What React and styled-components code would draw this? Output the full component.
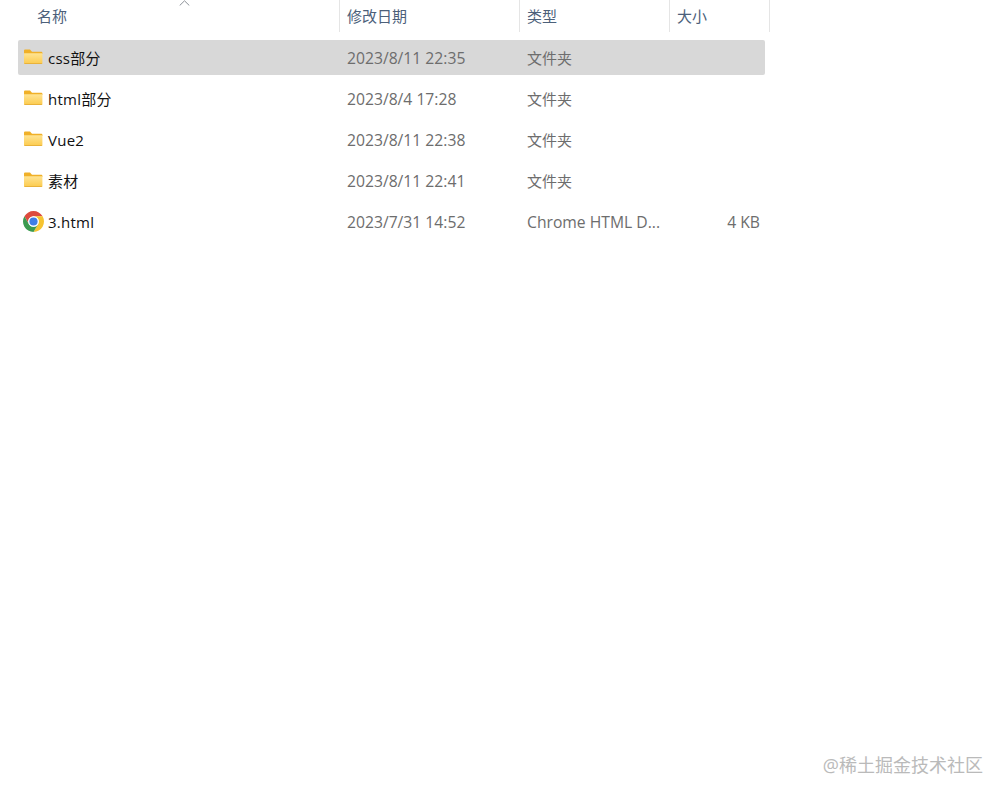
import React from 'react';
import styled, {createGlobalStyle} from "styled-components";

const GlobalStyle = createGlobalStyle`
  html, body {
    margin: 0;
    background: #fff;
  }
  body {
    font-family: "Open Sans", "Noto Sans CJK SC", sans-serif;
  }
`;

const files = [
    {name: 'css部分', date: '2023/8/11 22:35', type: '文件夹', selected: true},
    {name: 'html部分', date: '2023/8/4 17:28', type: '文件夹'},
    {name: 'Vue2', date: '2023/8/11 22:38', type: '文件夹'},
    {name: '素材', date: '2023/8/11 22:41', type: '文件夹'},
    {name: '3.html', date: '2023/7/31 14:52', type: 'Chrome HTML D...', size: '4 KB', chrome: true},
];

const FolderIcon = () => (
    <svg width="20" height="16" viewBox="0 0 20 16">
        <defs>
            <linearGradient id="folderFill" x1="0" y1="0" x2="0" y2="1">
                <stop offset="0" stopColor="#ffe493"/>
                <stop offset="1" stopColor="#fccb4e"/>
            </linearGradient>
        </defs>
        <path d="M1 1.5C1 1 1.4.6 2 .6h5l2 2.2h9.5c.5 0 .9.4.9.9V5H1z" fill="#f0b028"/>
        <path d="M1 4.2h18.4v9.6c0 .6-.4 1-1 1H2c-.6 0-1-.4-1-1z" fill="url(#folderFill)"/>
        <path d="M1 14h18.4v.1c0 .5-.4.8-1 .8H2c-.6 0-1-.3-1-.8z" fill="#e9b23a"/>
    </svg>
);

const ChromeIcon = () => (
    <svg width="21" height="21" viewBox="2 2 44 44">
        <path d="M43.05 13H24A11 11 0 0 0 14.47 29.5L4.95 13A22 22 0 0 1 43.05 13z" fill="#dd4b3e"/>
        <path d="M24 46L33.53 29.5A11 11 0 0 0 24 13H43.05A22 22 0 0 1 24 46z" fill="#f6c431"/>
        <path d="M4.95 13L14.47 29.5A11 11 0 0 0 33.53 29.5L24 46A22 22 0 0 1 4.95 13z" fill="#3c9a50"/>
        <circle cx="24" cy="24" r="11" fill="#fff"/>
        <circle cx="24" cy="24" r="8.6" fill="#3f7ee6"/>
    </svg>
);

const App = () => {
    return (
        <Page>
            <GlobalStyle/>
            <Header>
                <HeaderCell width="321px" $indent="19px">
                    名称
                    <SortArrow width="11" height="6" viewBox="0 0 11 6">
                        <path d="M.7 5.5L5.5.8l4.8 4.7" fill="none" stroke="#8a8f96" strokeWidth="1"/>
                    </SortArrow>
                </HeaderCell>
                <HeaderCell width="180px" $divider>修改日期</HeaderCell>
                <HeaderCell width="150px" $divider>类型</HeaderCell>
                <HeaderCell width="101px" $divider $last>大小</HeaderCell>
            </Header>
            <List>
                {files.map((file) => (
                    <Row key={file.name} $selected={file.selected}>
                        <NameCell>
                            <IconSlot $chrome={file.chrome}>{file.chrome ? <ChromeIcon/> : <FolderIcon/>}</IconSlot>
                            {file.name}
                        </NameCell>
                        <DateCell>{file.date}</DateCell>
                        <TypeCell $latin={file.chrome}>{file.type}</TypeCell>
                        <SizeCell>{file.size}</SizeCell>
                    </Row>
                ))}
            </List>
            <Watermark>@稀土掘金技术社区</Watermark>
        </Page>
    );
};
export default App;

const Page = styled.div`
  position: relative;
  height: 798px;
  padding-left: 18px;
  box-sizing: border-box;
  overflow: hidden;
`;

const Header = styled.div`
  display: flex;
  height: 32px;
`;

const HeaderCell = styled.div`
  position: relative;
  box-sizing: border-box;
  width: ${(props) => props.width};
  padding-left: ${(props) => props.$indent || "7px"};
  padding-top: 5px;
  font-size: 15px;
  line-height: 23px;
  color: #4c607a;
  border-left: ${(props) => props.$divider ? "1px solid #e5e5e5" : "none"};
  border-right: ${(props) => props.$last ? "1px solid #e5e5e5" : "none"};
`;

const SortArrow = styled.svg`
  position: absolute;
  left: 161px;
  top: 0;
`;

const List = styled.div`
  display: flex;
  flex-direction: column;
  gap: 6px;
  width: 747px;
  margin-top: 8px;
`;

const Row = styled.div`
  display: flex;
  align-items: center;
  height: 35px;
  font-size: 15px;
  border-radius: 2px;
  background: ${(props) => props.$selected ? "#d8d8d8" : "transparent"};
`;

const NameCell = styled.div`
  display: flex;
  align-items: center;
  width: 329px;
  padding-left: 5px;
  box-sizing: border-box;
  letter-spacing: .25px;
  color: #111;
`;

const IconSlot = styled.span`
  display: flex;
  align-items: center;
  width: 25px;
  height: 21px;
  margin-top: ${(props) => props.$chrome ? "-1px" : "-2px"};
`;

const DateCell = styled.div`
  width: 180px;
  font-size: 15.7px;
  color: #6d6d6d;
`;

const TypeCell = styled.div`
  width: 150px;
  font-size: ${(props) => props.$latin ? "15.7px" : "15px"};
  color: #6d6d6d;
  white-space: nowrap;
`;

const SizeCell = styled.div`
  flex: 1;
  padding-right: 5px;
  text-align: right;
  font-size: 15.7px;
  color: #6d6d6d;
`;

const Watermark = styled.div`
  position: absolute;
  right: 22px;
  top: 753px;
  font-size: 18px;
  line-height: 24px;
  color: #bababa;
`;
